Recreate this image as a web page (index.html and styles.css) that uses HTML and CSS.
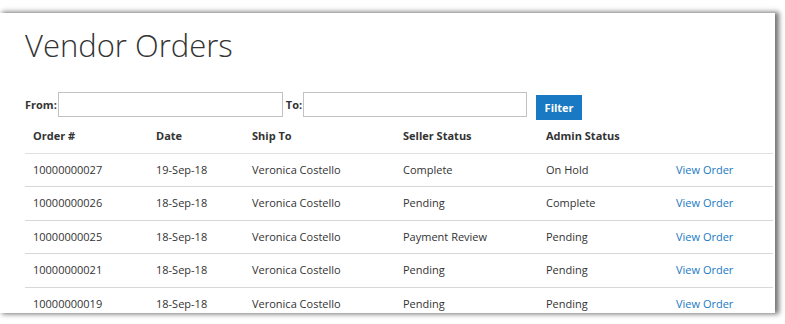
FILE: index.html
```html
<!DOCTYPE html>
<html>
<head>
<meta charset="utf-8">
<link rel="stylesheet" href="styles.css">
</head>
<body>
<div class="stage">
  <div class="panel">
    <h1 class="title">Vendor Orders</h1>
    <form class="filter">
      <label class="lbl">From:</label>
      <input class="field field-from" type="text">
      <label class="lbl lbl-to">To:</label>
      <input class="field" type="text">
      <button class="btn" type="button">Filter</button>
    </form>
    <table class="orders">
      <colgroup>
        <col class="c1"><col class="c2"><col class="c3"><col class="c4"><col class="c5"><col class="c6">
      </colgroup>
      <thead>
        <tr><th>Order #</th><th>Date</th><th>Ship To</th><th>Seller Status</th><th>Admin Status</th><th></th></tr>
      </thead>
      <tbody>
        <tr><td>10000000027</td><td>19-Sep-18</td><td>Veronica Costello</td><td>Complete</td><td>On Hold</td><td><a href="#">View Order</a></td></tr>
        <tr><td>10000000026</td><td>18-Sep-18</td><td>Veronica Costello</td><td>Pending</td><td>Complete</td><td><a href="#">View Order</a></td></tr>
        <tr><td>10000000025</td><td>18-Sep-18</td><td>Veronica Costello</td><td>Payment Review</td><td>Pending</td><td><a href="#">View Order</a></td></tr>
        <tr><td>10000000021</td><td>18-Sep-18</td><td>Veronica Costello</td><td>Pending</td><td>Pending</td><td><a href="#">View Order</a></td></tr>
        <tr><td>10000000019</td><td>18-Sep-18</td><td>Veronica Costello</td><td>Pending</td><td>Pending</td><td><a href="#">View Order</a></td></tr>
      </tbody>
    </table>
  </div>
</div>
</body>
</html>
```
FILE: styles.css
```css
html, body {
  margin: 0;
  padding: 0;
  background: #ffffff;
  overflow: hidden;
}
body {
  font-family: "Open Sans", "Liberation Sans", sans-serif;
  color: #333333;
}
.stage {
  width: 785px;
  height: 324px;
  padding-top: 13px;
  box-sizing: border-box;
}
.panel {
  width: 775px;
  height: 300px;
  background: #ffffff;
  box-sizing: border-box;
  padding-left: 25px;
  overflow: hidden;
  box-shadow: 3px 0 5px 1px rgba(0, 0, 0, 0.55);
}
.title {
  margin: 0;
  padding-top: 13px;
  font-weight: 300;
  font-size: 31px;
  line-height: 38px;
  color: #333333;
}
.filter {
  display: flex;
  align-items: flex-start;
  margin: 28px 0 0 0;
  height: 28px;
}
.lbl {
  font-size: 11px;
  font-weight: 700;
  line-height: 25px;
  margin-right: 1px;
}
.lbl-to {
  margin-left: 3px;
}
.field {
  width: 224px;
  height: 25px;
  box-sizing: border-box;
  border: 1px solid #c2c2c2;
  margin: 0;
  padding: 0 6px;
  font-family: inherit;
}
.field-from {
  width: 225px;
}
.btn {
  margin: 3px 0 0 9px;
  width: 46px;
  height: 25px;
  border: 1px solid #1979c3;
  background: #1979c3;
  color: #ffffff;
  font-family: inherit;
  font-weight: 700;
  font-size: 11px;
  padding: 0;
}
.orders {
  width: 748px;
  table-layout: fixed;
  border-collapse: collapse;
  font-size: 11px;
}
.c1 { width: 123px; }
.c2 { width: 96px; }
.c3 { width: 151px; }
.c4 { width: 143px; }
.c5 { width: 130px; }
.c6 { width: 105px; }
.orders th,
.orders td {
  text-align: left;
  padding: 9px 8px;
  line-height: 14.5px;
  white-space: nowrap;
}
.orders th {
  font-weight: 700;
  border-bottom: 1px solid #e0e0e0;
}
.orders td {
  border-bottom: 1px solid #d8d8d8;
}
.orders a {
  color: #1979c3;
  text-decoration: none;
}
```
